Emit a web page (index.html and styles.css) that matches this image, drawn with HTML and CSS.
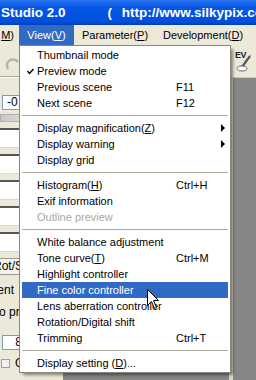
FILE: index.html
```html
<!DOCTYPE html>
<html lang="en">
<head>
    <meta charset="UTF-8">
    <title>SILKYPIX Developer Studio 2.0</title>
    <link rel="stylesheet" href="styles.css">
</head>
<body>
    <div class="window">
        <div class="titlebar">
            <span class="app-name">Studio 2.0</span>
            <span class="app-url">( http://www.silkypix.com )</span>
        </div>

        <div class="menubar">
            <span class="mb-item mb-cut"><u>M</u>)</span>
            <span class="mb-item active">View(<u>V</u>)</span>
            <span class="mb-item mb-param">Parameter(<u>P</u>)</span>
            <span class="mb-item">Development(<u>D</u>)</span>
        </div>

        <div class="workspace">
            <!-- left control panel, mostly hidden by the open menu -->
            <div class="side-panel">
                <div class="side-toolbar">
                    <svg class="redo-icon" width="16" height="16" viewBox="0 0 16 16">
                        <path d="M3 13 A6 6 0 1 1 13 6" fill="none" stroke="#b4b4b4" stroke-width="2.5"/>
                    </svg>
                </div>
                <div class="field">-0.</div>
                <div class="gauge"></div>
                <div class="list-box"></div>
                <div class="list-box"></div>
                <div class="list-box"></div>
                <div class="list-box"></div>
                <div class="list-box"></div>
                <div class="panel-btn">Rot/Slant</div>
                <div class="panel-label label-adjust">Adjustment</div>
                <div class="panel-label label-auto">Auto process</div>
                <div class="field num">8</div>
                <div class="check-row"><span class="checkbox"></span>Q</div>
            </div>

            <div class="viewer">
                <div class="viewer-toolbar">
                    <span class="ev-icon">
                        <span class="ev-text">EV</span>
                        <svg width="17" height="24" viewBox="0 0 17 24">
                            <path d="M15 7 L7 18" stroke="#555" stroke-width="2.2"/>
                            <path d="M15 7 L16 6" stroke="#bbb" stroke-width="2"/>
                            <ellipse cx="7" cy="19.5" rx="5" ry="2.5" fill="#fff" stroke="#666"/>
                        </svg>
                    </span>
                </div>
                <div class="canvas">
                    <div class="canvas-main"></div>
                    <div class="splitter"></div>
                    <div class="canvas-side"></div>
                </div>
            </div>
        </div>

        <!-- open View menu -->
        <div class="dropdown">
            <div class="item"><span></span><span>Thumbnail mode</span></div>
            <div class="item"><span class="check"><svg width="7" height="7" viewBox="0 0 7 7"><path d="M0.5 3 L2.5 5.5 L6.5 1" fill="none" stroke="#000" stroke-width="1.4"/></svg></span><span>Preview mode</span></div>
            <div class="item"><span></span><span>Previous scene</span><span class="key">F11</span></div>
            <div class="item"><span></span><span>Next scene</span><span class="key">F12</span></div>
            <div class="sep"></div>
            <div class="item"><span></span><span>Display magnification(<u>Z</u>)</span><span></span><span class="sub"></span></div>
            <div class="item"><span></span><span>Display warning</span><span></span><span class="sub"></span></div>
            <div class="item"><span></span><span>Display grid</span></div>
            <div class="sep"></div>
            <div class="item"><span></span><span>Histogram(<u>H</u>)</span><span class="key">Ctrl+H</span></div>
            <div class="item"><span></span><span>Exif information</span></div>
            <div class="item disabled"><span></span><span>Outline preview</span></div>
            <div class="sep"></div>
            <div class="item"><span></span><span>White balance adjustment</span></div>
            <div class="item"><span></span><span>Tone curve(<u>T</u>)</span><span class="key">Ctrl+M</span></div>
            <div class="item"><span></span><span>Highlight controller</span></div>
            <div class="item selected"><span></span><span>Fine color controller</span></div>
            <div class="item"><span></span><span>Lens aberration controller</span></div>
            <div class="item"><span></span><span>Rotation/Digital shift</span></div>
            <div class="item"><span></span><span>Trimming</span><span class="key">Ctrl+T</span></div>
            <div class="sep"></div>
            <div class="item"><span></span><span>Display setting (<u>D</u>)...</span></div>
        </div>

        <svg class="cursor" width="13" height="21" viewBox="0 0 13 21">
            <path d="M0.5 0.5 L0.5 16.5 L4.5 12.5 L7.5 19.5 L9.5 18.5 L6.5 11.5 L11.5 11.5 Z" fill="#fff" stroke="#000" stroke-width="1"/>
        </svg>
    </div>
</body>
</html>
```

FILE: styles.css
```css
/* Reset */
* {
    margin: 0;
    padding: 0;
    box-sizing: border-box;
}

body {
    font-family: 'Liberation Sans', Arial, sans-serif;
    font-size: 11px;
    color: #000;
    background: #ece9d8;
}

.window {
    position: relative;
    width: 256px;
    height: 380px;
    overflow: hidden;
    display: flex;
    flex-direction: column;
}

/* Title bar */
.titlebar {
    height: 25px;
    flex: none;
    display: flex;
    align-items: center;
    white-space: nowrap;
    background: linear-gradient(#2a74f0, #0757e6 30%, #0050dc 85%, #003fc0);
    color: #fff;
    font-weight: bold;
    font-size: 13.5px;
}

.app-name {
    margin-left: 1px;
}

.app-url {
    margin-left: 42px;
    word-spacing: 6px;
}

/* Menu bar */
.menubar {
    height: 20px;
    flex: none;
    display: flex;
    white-space: nowrap;
    background: #ece9d8;
}

.mb-item {
    line-height: 20px;
    padding: 0 7px;
}

.mb-cut {
    width: 19px;
    padding: 0 5px 0 0;
    text-align: right;
    overflow: hidden;
}

.mb-item.active {
    background: #316ac5;
    color: #fff;
    width: 55px;
    text-align: center;
    padding: 0;
}

.mb-param {
    width: 82px;
    padding-left: 8px;
}

/* Workspace behind the menu */
.workspace {
    flex: 1;
    display: flex;
}

.side-panel {
    width: 63px;
    flex: none;
    display: flex;
    flex-direction: column;
    background: #ece9d8;
}

.side-toolbar {
    height: 32px;
    padding: 11px 0 0 5px;
    border-bottom: 1px solid #aca899;
    box-shadow: 0 1px 0 #fff;
}

.field {
    margin: 18px 0 0 2px;
    height: 15px;
    background: #fff;
    border: 1px solid #7f9db9;
    padding-left: 4px;
    line-height: 13px;
    font-size: 12px;
}

.gauge {
    margin: 4px 3px 0 0;
    height: 8px;
    background: linear-gradient(90deg, #c8c8c8, #f4f4f4);
    border: 1px solid #b0b0b0;
}

.list-box {
    margin-top: 6px;
    height: 20px;
    background: #fff;
    border-top: 2px solid #555;
    border-bottom: 1px solid #d8d8d8;
}

.panel-btn {
    margin-top: 6px;
    height: 17px;
    line-height: 15px;
    margin-left: -8px;
    white-space: nowrap;
    background: #f4f3ee;
    border: 1px solid #9c9a8c;
    font-size: 12px;
}

.panel-label {
    margin-top: 7px;
    height: 16px;
    line-height: 16px;
    white-space: nowrap;
    font-size: 12px;
}

.label-adjust {
    margin-left: -46px;
}

.label-auto {
    margin-top: 6px;
    margin-left: -19px;
}

.field.num {
    margin-top: 15px;
    text-align: right;
    padding-right: 40px;
}

.check-row {
    margin-top: 6px;
    display: flex;
    align-items: center;
    gap: 5px;
    padding-left: 1px;
    font-size: 12px;
}

.checkbox {
    width: 9px;
    height: 9px;
    border: 1px solid #a0a0a0;
    background: #f0f0f0;
}

.viewer {
    flex: 1;
    display: flex;
    flex-direction: column;
}

.viewer-toolbar {
    height: 33px;
    display: flex;
    justify-content: flex-end;
    padding: 4px 3px 0 0;
    background: #ece9d8;
    border-bottom: 1px solid #c9c6b6;
}

.ev-icon {
    display: grid;
    width: 18px;
    height: 24px;
}

.ev-icon > * {
    grid-area: 1 / 1;
}

.ev-text {
    font-size: 9px;
    font-weight: bold;
    color: #222;
    letter-spacing: -0.5px;
    line-height: 10px;
    margin-top: 1px;
}

.canvas {
    flex: 1;
    display: flex;
}

.canvas-main {
    flex: 1;
    background: #868686;
}

.splitter {
    width: 4px;
    background: #d8d5c6;
}

.canvas-side {
    width: 23px;
    background: #868686;
}

/* Dropdown menu */
.dropdown {
    position: absolute;
    left: 19px;
    top: 45px;
    width: 212px;
    background: #fff;
    border: 1px solid #8a867a;
    padding: 1px 2px;
    box-shadow: 3px 3px 3px -1px rgba(0, 0, 0, 0.45);
}

.item {
    display: grid;
    grid-template-columns: 15px 139px 1fr 12px;
    height: 16px;
    line-height: 16px;
    white-space: nowrap;
}

.item.selected {
    background: #316ac5;
    color: #fff;
}

.item.disabled {
    color: #aca899;
}

.check {
    display: flex;
    align-items: center;
    justify-content: flex-end;
    padding-right: 3px;
}

.sub {
    width: 0;
    height: 0;
    margin-top: 4px;
    margin-left: 5px;
    border-left: 4px solid #000;
    border-top: 4px solid transparent;
    border-bottom: 4px solid transparent;
}

.sep {
    height: 9px;
    position: relative;
}

.sep::after {
    content: "";
    position: absolute;
    left: 0;
    right: 0;
    top: 4px;
    border-top: 1px solid #aca899;
}

.cursor {
    position: absolute;
    left: 147px;
    top: 289px;
}
```
